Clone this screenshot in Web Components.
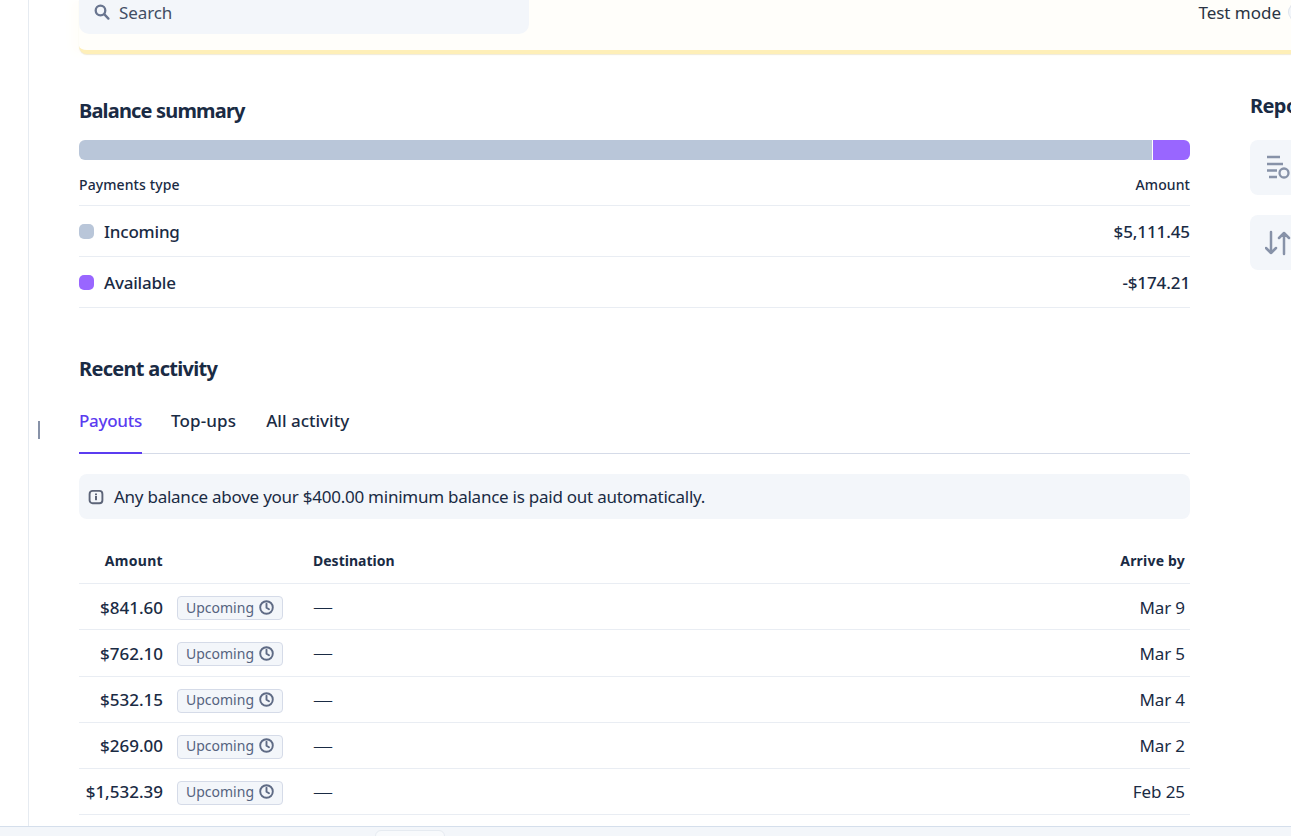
<!DOCTYPE html>
<html lang="en">
<head>
<meta charset="utf-8">
<title>Balances</title>
<style>
  html, body { margin: 0; height: 100%; overflow: hidden; background: #fff; }
  body { font-family: "Noto Sans", "Open Sans", sans-serif; color: #1a2b44; }
</style>
</head>
<body>
<dash-shell>
  <top-banner slot="banner"></top-banner>
  <balance-summary></balance-summary>
  <recent-activity></recent-activity>
  <report-rail slot="side"></report-rail>
</dash-shell>

<script>
const ICONS = {
  search: `<svg width="16" height="16" viewBox="0 0 16 16" fill="none" stroke="#69758f" stroke-width="2.3" stroke-linecap="round"><circle cx="6.5" cy="6.5" r="4.8"/><path d="M10.4 10.4 14.4 14.600"/></svg>`,
  info: `<svg width="16" height="16" viewBox="0 0 16 16" fill="none"><rect x="1.600" y="1.900" width="12.800" height="12.400" rx="3" stroke="#5c6478" stroke-width="1.900"/><rect x="7" y="7" width="2" height="4.200" fill="#5c6478"/><rect x="7" y="4.500" width="2" height="1.700" fill="#5c6478"/></svg>`,
  clock: `<svg width="15" height="15" viewBox="0 0 15 15" fill="none" stroke="#5f6b85" stroke-width="1.900" stroke-linecap="round" stroke-linejoin="round"><circle cx="7.500" cy="7.500" r="6.300"/><path d="M7.500 3.800v3.900l2.500 1.600"/></svg>`,
  filter: `<svg width="28" height="26" viewBox="0 0 28 26" fill="none" stroke="#8792a8" stroke-width="2.300"><path d="M2 2h13M2 9h16M2 15.500h10M4 22h8"/><circle cx="19" cy="18" r="4.500"/></svg>`,
  arrows: `<svg width="28" height="28" viewBox="0 0 28 28" fill="none" stroke="#8792a8" stroke-width="2.500" stroke-linecap="round" stroke-linejoin="round"><path d="M6 3v21M1 19l5 5 5-5M19 25V4M14 9l5-5 5 5"/></svg>`
};

class DashShell extends HTMLElement {
  constructor() {
    super();
    this.attachShadow({ mode: "open" });
    this.shadowRoot.innerHTML = `
      <style>
        :host { display: flex; flex-direction: column; height: 836px; overflow: hidden; position: relative; }
        .page { flex: 1; min-height: 0; display: flex; overflow: hidden; }
        .rail { flex: none; width: 28px; border-right: 1px solid #e6ebf1; }
        .handle { position: absolute; left: 38px; top: 421px; width: 2px; height: 18px; background: #8792a8; }
        .body { flex: 1; min-width: 0; display: flex; flex-direction: column; }
        .cols { display: flex; padding-left: 50px; }
        .main { flex: none; width: 1111px; padding-top: 45px; }
        .side { flex: none; margin-left: 60px; padding-top: 40px; }
        .foot { flex: none; height: 9px; background: #f3f6fa; border-top: 1px solid #d5dfec; position: relative; }
        .tab { position: absolute; left: 375px; top: 3px; width: 70px; height: 12px; background: #f8fafc; border: 1px solid #e6ebf1; border-radius: 6px 6px 0 0; box-sizing: border-box; }
      </style>
      <div class="page">
        <div class="rail"></div>
        <div class="body">
          <slot name="banner"></slot>
          <div class="cols">
            <div class="main"><slot></slot></div>
            <div class="side"><slot name="side"></slot></div>
          </div>
        </div>
      </div>
      <div class="handle"></div>
      <div class="foot"><div class="tab"></div></div>
    `;
  }
}

class TopBanner extends HTMLElement {
  constructor() {
    super();
    this.attachShadow({ mode: "open" });
    this.shadowRoot.innerHTML = `
      <style>
        :host { display: block; margin-left: 50px; }
        .bar { height: 50px; display: flex; justify-content: space-between; background: #fffefa; border-bottom: 4px solid #feefb8; border-radius: 0 0 0 8px; box-shadow: 0 1px 1px rgba(190,170,110,.25), -8px 0 10px #fffefa; }
        .search { width: 450px; height: 34px; box-sizing: border-box; background: #f3f6fa; border-radius: 0 0 10px 10px; display: flex; align-items: center; gap: 9px; padding: 0 0 10px 15px; font-size: 17px; letter-spacing: -.1px; color: #414d63; }
        .mode { font-size: 17px; letter-spacing: -.02px; color: #2b3444; margin-right: -7px; display: flex; gap: 7px; height: 24px; align-items: center; white-space: nowrap; }
        .toggle { width: 10px; height: 18px; border: 1px solid #dfe4ec; border-right: 0; border-radius: 9px 0 0 9px; box-sizing: border-box; background: #f3f6fa; }
      </style>
      <div class="bar">
        <div class="search">${ICONS.search}<span>Search</span></div>
        <div class="mode"><span>Test mode</span><span class="toggle"></span></div>
      </div>
    `;
  }
}

class BalanceSummary extends HTMLElement {
  constructor() {
    super();
    this.attachShadow({ mode: "open" });
    this.shadowRoot.innerHTML = `
      <style>
        :host { display: block; }
        h2 { margin: 0; font-size: 20px; line-height: 24px; font-weight: 700; letter-spacing: -.83px; color: #1a2b44; }
        .meter { display: flex; height: 20px; margin-top: 17px; gap: 1px; }
        .meter i { display: block; }
        .in { flex: 1; background: #b9c6d9; border-radius: 6px 0 0 6px; }
        .av { width: 37px; background: #9966ff; border-radius: 0 6px 6px 0; }
        .head, .row { display: flex; justify-content: space-between; align-items: center; border-bottom: 1px solid #e9edf3; }
        .head { height: 41px; padding-top: 4px; font-size: 14px; font-weight: 500; letter-spacing: .1px; color: #1a2b44; }
        .row { height: 49px; padding-top: 1px; font-size: 17px; font-weight: 500; letter-spacing: -.2px; color: #1a2b44; }
        .row .val { letter-spacing: -.1px; }
        .label { display: flex; align-items: center; gap: 10px; }
        .dot { width: 15px; height: 15px; border-radius: 5px; margin-top: -1px; }
      </style>
      <h2>Balance summary</h2>
      <div class="meter"><i class="in"></i><i class="av"></i></div>
      <div class="head"><span>Payments type</span><span>Amount</span></div>
      <div class="row"><span class="label"><span class="dot" style="background:#b9c6d9"></span>Incoming</span><span class="val">$5,111.45</span></div>
      <div class="row"><span class="label"><span class="dot" style="background:#9966ff"></span>Available</span><span class="val">-$174.21</span></div>
    `;
  }
}

class PayoutRow extends HTMLElement {
  constructor() {
    super();
    this.attachShadow({ mode: "open" });
  }

  connectedCallback() {
    const amount = this.getAttribute("amount");
    const date = this.getAttribute("date");
    this.shadowRoot.innerHTML = `
      <style>
        :host { display: grid; grid-template-columns: 84px 150px 1fr auto; align-items: center; height: 44.2px; padding-top: 1px; border-bottom: 1px solid #e9edf3; font-size: 17px; color: #1a2b44; }
        .amt { text-align: right; font-weight: 500; white-space: nowrap; }
        .pill { margin: 2px 0 0 14px; padding-bottom: 2px; width: 106px; height: 24px; box-sizing: border-box; display: flex; align-items: center; justify-content: center; gap: 5px; background: #f3f6fa; border: 1px solid #d5dbe8; border-radius: 4px; font-size: 14px; color: #55637f; }
        .dash { font-size: 20px; font-weight: 300; line-height: 24px; }
        .date { padding-right: 5px; letter-spacing: -.1px; }
      </style>
      <span class="amt">${amount}</span>
      <span class="pill"><span>Upcoming</span>${ICONS.clock}</span>
      <span class="dash">—</span>
      <span class="date">${date}</span>
    `;
  }
}

class RecentActivity extends HTMLElement {
  constructor() {
    super();
    this.attachShadow({ mode: "open" });
    this.shadowRoot.innerHTML = `
      <style>
        :host { display: block; margin-top: 49px; }
        h2 { margin: 0; font-size: 20px; line-height: 24px; font-weight: 700; letter-spacing: -.69px; color: #1a2b44; }
        .tabs { display: flex; gap: 29px; margin-top: 18px; height: 55px; box-sizing: border-box; border-bottom: 1px solid #d5dbe8; font-size: 17px; font-weight: 500; }
        .tabs span { padding-top: 10px; margin-bottom: -1px; }
        .tabs .on { color: #5b3cf0; border-bottom: 2px solid #5b3cf0; letter-spacing: -.28px; }
        .tabs .topups { letter-spacing: .15px; }
        .tabs .all { margin-left: 1px; }
        .note { margin-top: 20px; height: 45px; background: #f3f6fa; border-radius: 8px; display: flex; align-items: center; gap: 10px; padding-left: 9px; font-size: 17px; letter-spacing: -.25px; color: #1a2b44; }
        .cols { display: grid; grid-template-columns: 84px 150px 1fr auto; align-items: center; height: 65.15px; padding-top: 18px; box-sizing: border-box; border-bottom: 1px solid #e9edf3; font-size: 14px; font-weight: 700; }
        .cols .r { text-align: right; letter-spacing: .3px; }
        .cols .e { padding-right: 5px; letter-spacing: .2px; }
      </style>
      <h2>Recent activity</h2>
      <div class="tabs"><span class="on">Payouts</span><span class="topups">Top-ups</span><span class="all">All activity</span></div>
      <div class="note">${ICONS.info}<span>Any balance above your $400.00 minimum balance is paid out automatically.</span></div>
      <div class="cols"><span class="r">Amount</span><span></span><span>Destination</span><span class="e">Arrive by</span></div>
      <payout-row amount="$841.60" date="Mar 9"></payout-row>
      <payout-row amount="$762.10" date="Mar 5"></payout-row>
      <payout-row amount="$532.15" date="Mar 4"></payout-row>
      <payout-row amount="$269.00" date="Mar 2"></payout-row>
      <payout-row amount="$1,532.39" date="Feb 25"></payout-row>
    `;
  }
}

class ReportRail extends HTMLElement {
  constructor() {
    super();
    this.attachShadow({ mode: "open" });
    this.shadowRoot.innerHTML = `
      <style>
        :host { display: block; width: 80px; }
        h3 { margin: 0 0 22px; font-size: 20px; line-height: 24px; font-weight: 700; letter-spacing: -.6px; color: #1a2b44; white-space: nowrap; }
        .tile { width: 80px; height: 55px; margin-bottom: 20px; background: #f3f6fa; border-radius: 8px; display: flex; align-items: center; padding-left: 15px; box-sizing: border-box; }
      </style>
      <h3>Reports</h3>
      <div class="tile">${ICONS.filter}</div>
      <div class="tile">${ICONS.arrows}</div>
    `;
  }
}

customElements.define("dash-shell", DashShell);
customElements.define("top-banner", TopBanner);
customElements.define("balance-summary", BalanceSummary);
customElements.define("payout-row", PayoutRow);
customElements.define("recent-activity", RecentActivity);
customElements.define("report-rail", ReportRail);
</script>
</body>
</html>
